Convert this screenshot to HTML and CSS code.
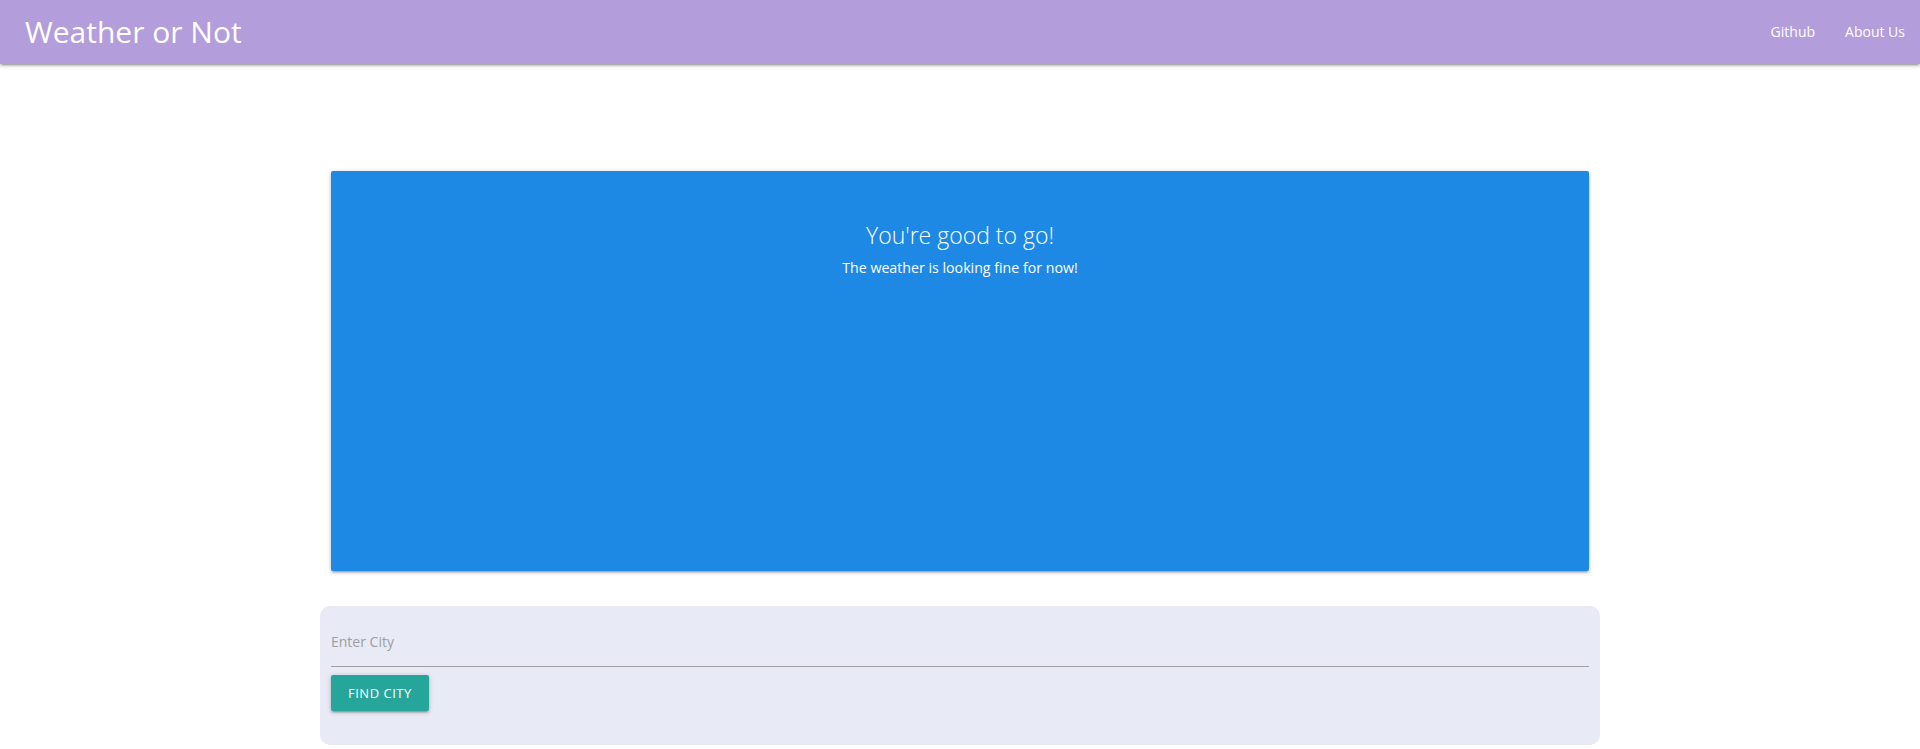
FILE: index.html
```html
<!DOCTYPE html>
<html lang="en">
<head>
<meta charset="utf-8">
<title>Weather or Not</title>
<link rel="stylesheet" href="styles.css">
</head>
<body>
<nav class="navbar">
  <a class="brand" href="#">Weather or Not</a>
  <ul class="nav-links">
    <li><a href="#">Github</a></li>
    <li><a href="#">About Us</a></li>
  </ul>
</nav>
<main class="container">
  <div class="col">
    <section class="status-card">
      <h5 class="status-title">You're good to go!</h5>
      <p class="status-text">The weather is looking fine for now!</p>
    </section>
  </div>
  <form class="search-panel">
    <input class="city-input" type="text" placeholder="Enter City">
    <button class="btn" type="button">Find City</button>
  </form>
</main>
</body>
</html>
```
FILE: styles.css
```css
html, body {
  margin: 0;
  padding: 0;
}
body {
  font-family: "Open Sans", "Noto Sans", sans-serif;
  background: #ffffff;
  color: rgba(0,0,0,0.87);
}
.navbar {
  height: 64px;
  background: #b39ddb;
  display: flex;
  align-items: center;
  justify-content: space-between;
  box-shadow: 0 2px 2px 0 rgba(0,0,0,.14), 0 3px 1px -2px rgba(0,0,0,.12), 0 1px 5px 0 rgba(0,0,0,.2);
  position: relative;
  z-index: 2;
}
.brand {
  color: #fff;
  text-decoration: none;
  font-size: 30px;
  padding-left: 25px;
  line-height: 64px;
}
.nav-links {
  list-style: none;
  margin: 0;
  padding: 0;
  display: flex;
  height: 64px;
}
.nav-links a {
  display: block;
  color: #fff;
  text-decoration: none;
  font-size: 14px;
  padding: 0 15px;
  line-height: 64px;
}
.container {
  width: 1280px;
  margin: 0 auto;
  padding-top: 107px;
}
.col {
  padding: 0 11px;
}
.status-card {
  height: 400px;
  box-sizing: border-box;
  background: #1e88e5;
  border-radius: 2px;
  box-shadow: 0 2px 2px 0 rgba(0,0,0,.14), 0 3px 1px -2px rgba(0,0,0,.12), 0 1px 5px 0 rgba(0,0,0,.2);
  color: #fff;
  text-align: center;
  padding: 48px 24px 24px;
}
.status-title {
  margin: 0;
  font-size: 23px;
  font-weight: 300;
  line-height: 32px;
}
.status-text {
  margin: 7px 0 0;
  font-size: 14.2px;
  line-height: 20px;
}
.search-panel {
  margin-top: 35px;
  background: #e8eaf6;
  border-radius: 10px;
  padding: 15px 11px 34px;
  height: 139px;
  box-sizing: border-box;
  display: flex;
  flex-direction: column;
  align-items: flex-start;
}
.city-input {
  width: 100%;
  height: 40px;
  padding: 0 0 5px;
  box-sizing: content-box;
  border: none;
  border-bottom: 1px solid #9e9e9e;
  background: transparent;
  outline: none;
  margin: 0 0 8px 0;
  font-family: inherit;
  font-size: 14px;
  color: rgba(0,0,0,0.87);
}
.city-input::placeholder {
  color: #9e9e9e;
}
.btn {
  height: 36px;
  padding: 0 17px;
  border: none;
  border-radius: 2px;
  background: #26a69a;
  color: #fff;
  font-family: inherit;
  font-size: 13px;
  letter-spacing: .5px;
  text-transform: uppercase;
  box-shadow: 0 2px 2px 0 rgba(0,0,0,.14), 0 3px 1px -2px rgba(0,0,0,.12), 0 1px 5px 0 rgba(0,0,0,.2);
  cursor: pointer;
}
```
